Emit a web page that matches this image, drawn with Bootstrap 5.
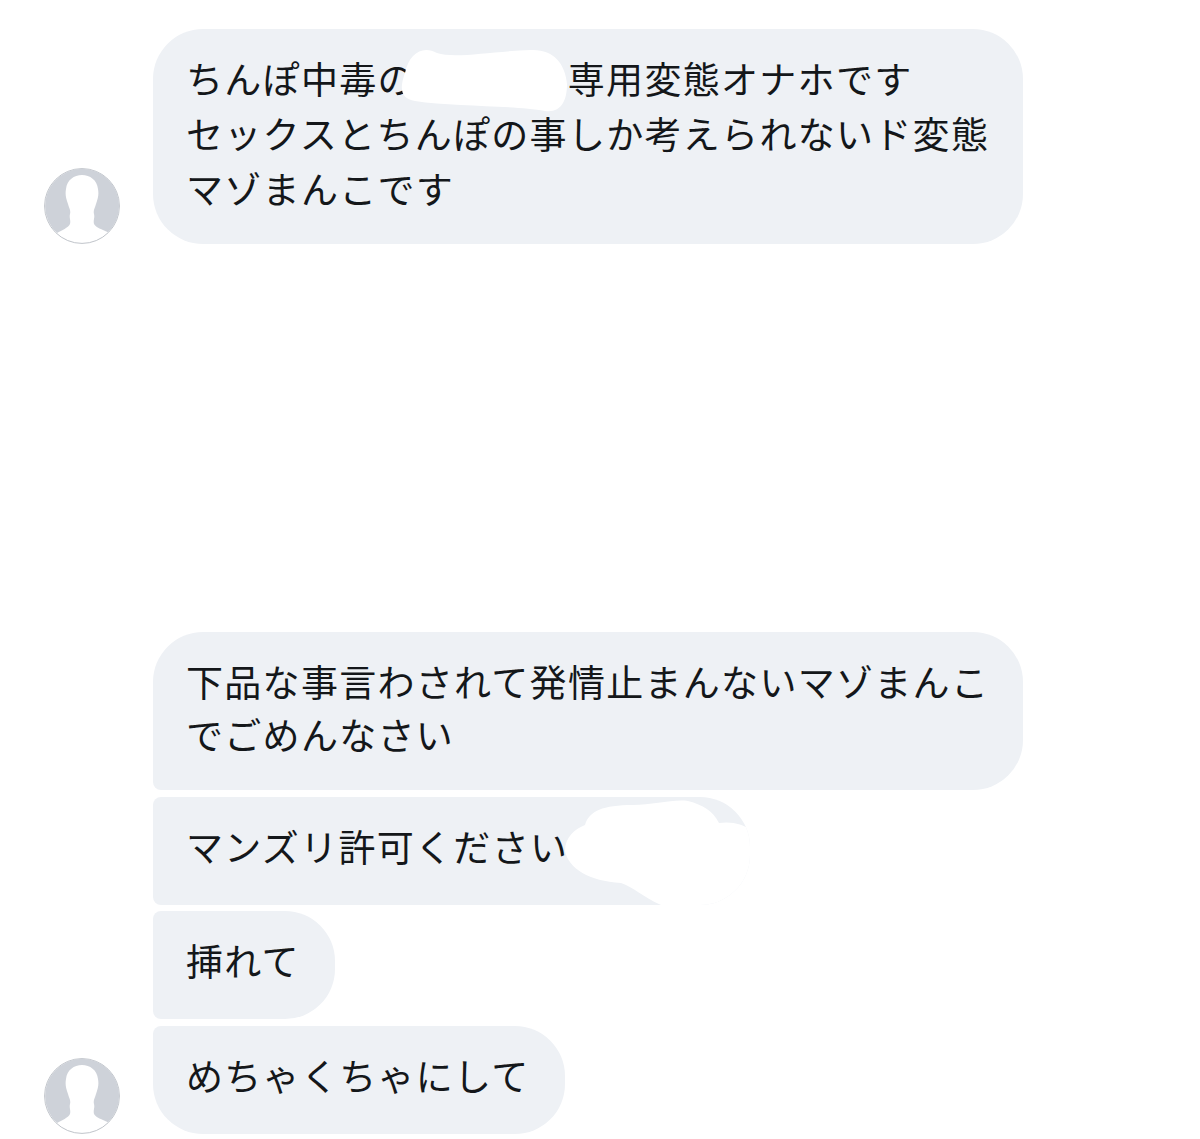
<!DOCTYPE html>
<html lang="ja">
<head>
  <meta charset="UTF-8">
  <title>Messages</title>
  <link href="https://cdn.jsdelivr.net/npm/bootstrap@5.3.0/dist/css/bootstrap.min.css" rel="stylesheet">
  <style>
    body {
      background: #fff;
      color: #14171a;
      font-family: "Noto Sans CJK JP", "Liberation Sans", sans-serif;
      overflow: hidden;
    }
    .chat-page {
      padding: 29px 0 0 44px;
      gap: 388px;
    }
    .chat-group { gap: 33px; }
    .avatar-pic {
      width: 76px;
      height: 76px;
      flex: none;
    }
    .bubble-stack { gap: 6.5px; }
    .chat-bubble {
      position: relative;
      overflow: hidden;
      background: #eef1f5;
      font-size: 37px;
      letter-spacing: 1.3px;
      line-height: 53px;
      white-space: nowrap;
      padding: 23px 33px 29px;
      border-radius: 8px 50px 50px 8px;
    }
    .bubble-solo { width: 870px; height: 215px; border-radius: 50px; line-height: 55px; padding-top: 22px; }
    .bubble-first { width: 870px; height: 158px; border-radius: 50px 50px 50px 8px; }
    .bubble-wide { width: 597px; height: 108px; }
    .bubble-short { width: 182px; height: 108px; }
    .bubble-last { width: 412px; height: 108px; border-radius: 8px 50px 50px 50px; }
    .gap-name { display: inline-block; width: 152px; }
    .blot {
      position: absolute;
      fill: #fff;
      left: 0;
      top: 0;
    }
  </style>
</head>
<body>

<div class="chat-page d-flex flex-column">

  <div class="chat-group d-flex align-items-end">
    <svg class="avatar-pic" viewBox="0 0 76 76">
      <circle cx="38" cy="38" r="37.4" fill="#fff" stroke="#c0c4ca" stroke-width="1"/>
      <path fill="#ced2d9" d="M13 65 A37 37 0 1 1 64 64.3 C58 61 52 60 50 56 C49 52 51 50 50 46 C49 42 51 40 52 36 C54 30 55 27 54 21 C53 12 46 7 38 7 C30 7 23 12 22 21 C21 27 22 30 24 36 C25 40 27 42 26 46 C25 50 27 52 26 56 C24 60 18 62 13 65 Z"/>
    </svg>
    <div class="chat-bubble bubble-solo">
      ちんぽ中毒の<span class="gap-name"></span>専用変態オナホです<br>
      セックスとちんぽの事しか考えられないド変態<br>
      マゾまんこです
      <svg class="blot" width="870" height="215" viewBox="0 0 870 215">
        <path d="M252 44 C256 24 270 16 284 24 C302 30 340 22 378 21 C400 20 412 34 414 55 C414 72 408 84 392 82 C360 76 300 78 262 72 C248 70 246 60 252 44 Z"/>
      </svg>
    </div>
  </div>

  <div class="chat-group d-flex align-items-end">
    <svg class="avatar-pic" viewBox="0 0 76 76">
      <circle cx="38" cy="38" r="37.4" fill="#fff" stroke="#c0c4ca" stroke-width="1"/>
      <path fill="#ced2d9" d="M13 65 A37 37 0 1 1 64 64.3 C58 61 52 60 50 56 C49 52 51 50 50 46 C49 42 51 40 52 36 C54 30 55 27 54 21 C53 12 46 7 38 7 C30 7 23 12 22 21 C21 27 22 30 24 36 C25 40 27 42 26 46 C25 50 27 52 26 56 C24 60 18 62 13 65 Z"/>
    </svg>
    <div class="bubble-stack d-flex flex-column align-items-start">
      <div class="chat-bubble bubble-first">
        下品な事言わされて発情止まんないマゾまんこ<br>
        でごめんなさい
      </div>
      <div class="chat-bubble bubble-wide">
        マンズリ許可ください
        <svg class="blot" width="597" height="108" viewBox="0 0 597 108">
          <path d="M432 28 C436 14 450 8 480 8 C500 8 520 2 535 4 C550 8 560 14 566 26 C580 24 590 28 597 32 L597 108 L508 108 C490 100 480 90 468 86 C436 84 416 72 412 54 C412 40 422 32 432 28 Z"/>
        </svg>
      </div>
      <div class="chat-bubble bubble-short">挿れて</div>
      <div class="chat-bubble bubble-last">めちゃくちゃにして</div>
    </div>
  </div>

</div>

<script src="https://cdn.jsdelivr.net/npm/bootstrap@5.3.0/dist/js/bootstrap.bundle.min.js"></script>
</body>
</html>
